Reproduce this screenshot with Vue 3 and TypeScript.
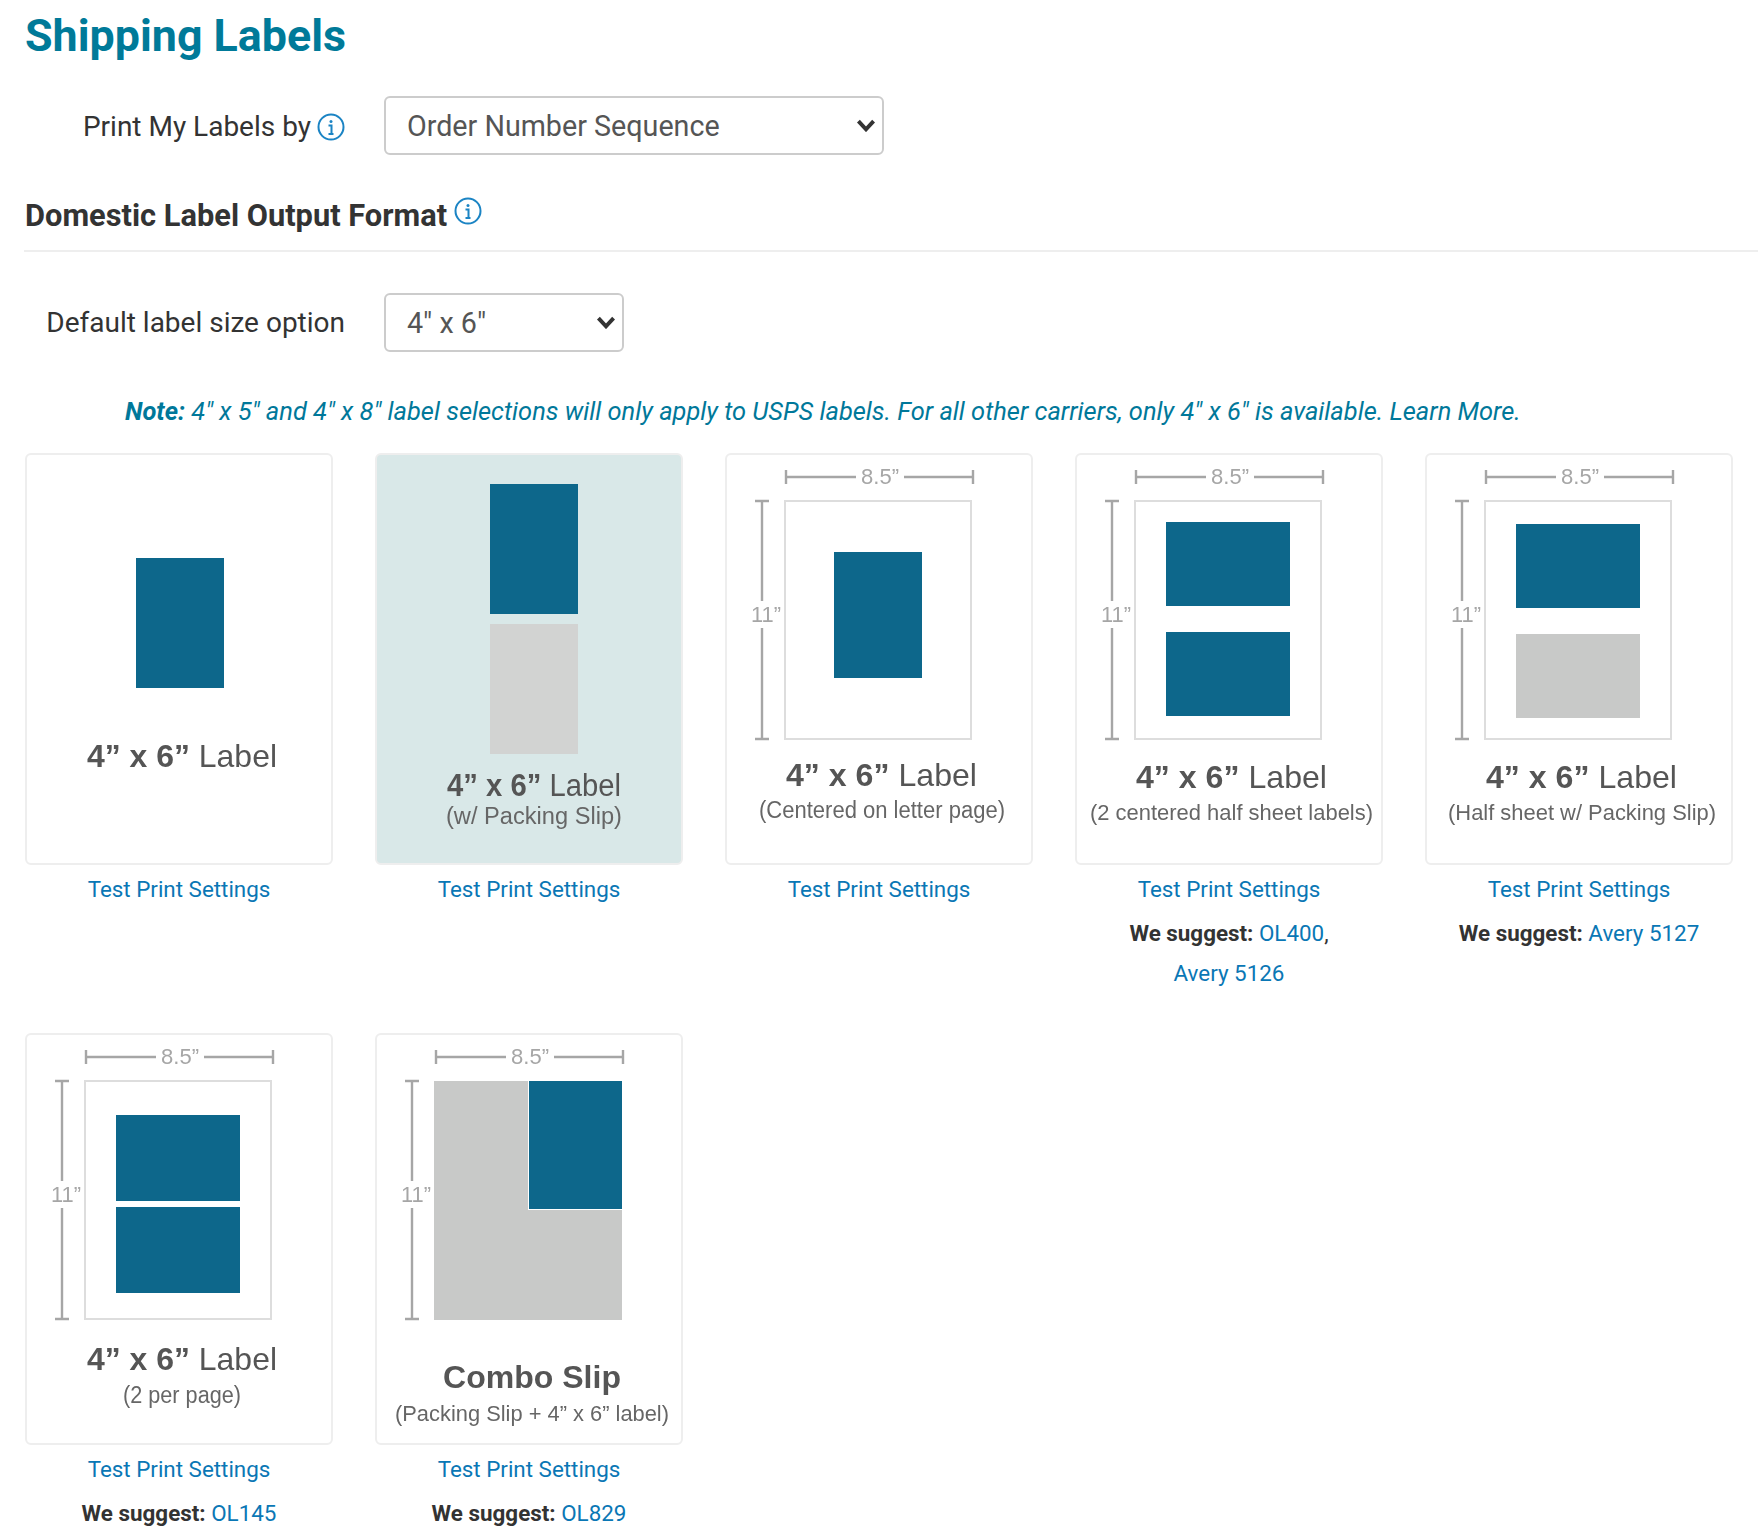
<script setup lang="ts">
interface Shape { x: number; y: number; w: number; h: number; c: string }
interface Line { x: number; y: number; len: number; t: string; bold?: string; rest?: string; size: number }
interface Sug { name: string; suffix?: string }
interface Card {
  dims: boolean
  page: boolean
  active?: boolean
  shapes: Shape[]
  title: Line
  sub?: Line
  suggest?: Sug[]
}
const BLUE = '#0d678b'
const GRAY = '#c8c9c8'
const t = (x: number, y: number, len: number, size = 32): Line => ({ x, y, len, t: '', bold: '4” x 6”', rest: ' Label', size })
const s = (x: number, y: number, len: number, text: string, size = 23): Line => ({ x, y, len, t: text, size })
const cards: Card[] = [
  { dims: false, page: false, shapes: [{ x: 111, y: 105, w: 88, h: 130, c: BLUE }], title: t(62, 314, 190) },
  { dims: false, page: false, active: true,
    shapes: [{ x: 115, y: 31, w: 88, h: 130, c: BLUE }, { x: 115, y: 171, w: 88, h: 130, c: '#d2d3d2' }],
    title: t(72, 343, 174, 31), sub: s(71, 371, 176, '(w/ Packing Slip)', 23) },
  { dims: true, page: true, shapes: [{ x: 109, y: 99, w: 88, h: 126, c: BLUE }],
    title: t(61, 333, 191), sub: s(34, 365, 246, '(Centered on letter page)') },
  { dims: true, page: true,
    shapes: [{ x: 91, y: 69, w: 124, h: 84, c: BLUE }, { x: 91, y: 179, w: 124, h: 84, c: BLUE }],
    title: t(61, 335, 191), sub: s(15, 367, 283, '(2 centered half sheet labels)', 21.5),
    suggest: [{ name: 'OL400', suffix: ',' }, { name: 'Avery 5126' }] },
  { dims: true, page: true,
    shapes: [{ x: 91, y: 71, w: 124, h: 84, c: BLUE }, { x: 91, y: 181, w: 124, h: 84, c: GRAY }],
    title: t(61, 335, 191), sub: s(23, 367, 268, '(Half sheet w/ Packing Slip)', 22),
    suggest: [{ name: 'Avery 5127' }] },
  { dims: true, page: true,
    shapes: [{ x: 91, y: 82, w: 124, h: 86, c: BLUE }, { x: 91, y: 174, w: 124, h: 86, c: BLUE }],
    title: t(62, 337, 190), sub: s(98, 370, 118, '(2 per page)'),
    suggest: [{ name: 'OL145' }] },
  { dims: true, page: false,
    shapes: [{ x: 59, y: 48, w: 188, h: 239, c: GRAY }, { x: 153, y: 48, w: 94, h: 129, c: '#ffffff' }, { x: 154, y: 48, w: 93, h: 128, c: BLUE }],
    title: { x: 68, y: 355, len: 178, t: 'Combo Slip', size: 32 },
    sub: s(20, 388, 274, '(Packing Slip + 4” x 6” label)', 21.5),
    suggest: [{ name: 'OL829' }] },
]
</script>

<template>
  <main class="page">
    <h1 class="title">Shipping Labels</h1>

    <div class="field first">
      <label class="field-label">
        Print My Labels by
        <svg class="info" viewBox="0 0 28 28" aria-hidden="true">
          <circle cx="14" cy="14" r="12.5" />
          <circle class="dot" cx="14" cy="8.5" r="1.5" />
          <path d="M11.5 12.5h3v8.5M11.5 21h5" />
        </svg>
      </label>
      <div class="select-wrap wide">
        <select class="select">
          <option>Order Number Sequence</option>
        </select>
        <svg class="chev" viewBox="0 0 18 12" aria-hidden="true"><path d="M2 2l7 7.5L16 2" /></svg>
      </div>
    </div>

    <h2 class="section">
      Domestic Label Output Format
      <svg class="info raised" viewBox="0 0 28 28" aria-hidden="true">
        <circle cx="14" cy="14" r="12.5" />
        <circle class="dot" cx="14" cy="8.5" r="1.5" />
        <path d="M11.5 12.5h3v8.5M11.5 21h5" />
      </svg>
    </h2>

    <div class="field">
      <label class="field-label">Default label size option</label>
      <div class="select-wrap narrow">
        <select class="select">
          <option>4" x 6"</option>
        </select>
        <svg class="chev" viewBox="0 0 18 12" aria-hidden="true"><path d="M2 2l7 7.5L16 2" /></svg>
      </div>
    </div>

    <p class="note">
      <strong>Note:</strong> 4" x 5" and 4" x 8" label selections will only apply to USPS labels. For all other carriers, only 4" x 6" is available. Learn More.
    </p>

    <div class="grid">
      <section v-for="(c, i) in cards" :key="i" class="cell">
        <div class="card" :class="{ active: c.active }">
          <svg class="art" viewBox="2 2 304 408" width="304" height="408">
            <g v-if="c.dims" class="dim">
              <path d="M61 17v14M61 24h70M179 24h69M248 17v14" />
              <path d="M30 48h14M37 48v100M37 175v111M30 286h14" />
              <text class="dim-text" x="136" y="31" textLength="38" lengthAdjust="spacingAndGlyphs">8.5”</text>
              <text class="dim-text" x="26" y="169" textLength="30" lengthAdjust="spacingAndGlyphs">11”</text>
            </g>
            <rect v-if="c.page" class="sheet" x="60" y="48" width="186" height="238" />
            <rect v-for="(r, j) in c.shapes" :key="j" :x="r.x" :y="r.y" :width="r.w" :height="r.h" :fill="r.c" />
            <text class="art-title" :x="c.title.x" :y="c.title.y" :font-size="c.title.size" :textLength="c.title.len" lengthAdjust="spacingAndGlyphs">
              <template v-if="c.title.bold"><tspan class="b">{{ c.title.bold }}</tspan>{{ c.title.rest }}</template>
              <tspan v-else class="b">{{ c.title.t }}</tspan>
            </text>
            <text v-if="c.sub" class="art-sub" :x="c.sub.x" :y="c.sub.y" :font-size="c.sub.size" :textLength="c.sub.len" lengthAdjust="spacingAndGlyphs">{{ c.sub.t }}</text>
          </svg>
        </div>
        <a class="link test" href="#" @click.prevent>Test Print Settings</a>
        <p v-if="c.suggest" class="suggest">
          <strong>We suggest:</strong>
          <template v-for="(g, k) in c.suggest" :key="k">
            {{ ' ' }}<a class="link" href="#" @click.prevent>{{ g.name }}</a>{{ g.suffix }}
          </template>
        </p>
      </section>
    </div>
  </main>
</template>

<style>
html, body { background: #fff; }
</style>

<style scoped>
.page {
  width: 1758px;
  height: 1530px;
  box-sizing: border-box;
  overflow: hidden;
  padding: 0 0 0 25px;
  font-family: Roboto, "Liberation Sans", sans-serif;
  color: #333;
}
.title {
  margin: 0;
  padding-top: 9px;
  font-size: 44.8px;
  line-height: 54px;
  font-weight: 700;
  color: #007a99;
}
.field {
  display: flex;
  align-items: center;
  gap: 39px;
  height: 59px;
}
.field.first { margin-top: 33px; }
.field-label {
  width: 320px;
  display: flex;
  justify-content: flex-end;
  align-items: center;
  gap: 6px;
  font-size: 28px;
  color: #333;
}
.field.first .field-label { padding-top: 2px; }
.info {
  width: 28px;
  height: 28px;
  flex: none;
  fill: none;
  stroke: #1b84c4;
  stroke-width: 2;
}
.info .dot { fill: #1b84c4; stroke: none; }
.raised { vertical-align: 1px; margin-left: -1px; }
.select-wrap {
  position: relative;
  height: 59px;
}
.select {
  display: block;
  width: 100%;
  height: 59px;
  box-sizing: border-box;
  border: 2px solid #ccc;
  border-radius: 6px;
  background: #fff;
  color: #555;
  font-family: inherit;
  font-size: 28.7px;
  padding: 0 12px 0 21px;
  appearance: none;
  -webkit-appearance: none;
}
.chev {
  position: absolute;
  right: 8px;
  top: 23px;
  width: 20px;
  height: 13px;
  fill: none;
  stroke: #333;
  stroke-width: 3.6;
  pointer-events: none;
}
.wide { width: 500px; }
.narrow { width: 240px; }
.section {
  margin: 38px 0 0 -1px;
  height: 59px;
  box-sizing: border-box;
  font-size: 30.8px;
  line-height: 46px;
  font-weight: 700;
  color: #333;
  border-bottom: 2px solid #eee;
  padding-left: 1px;
}
.section + .field { margin-top: 41px; }
.note {
  margin: 37px 0 0;
  padding-left: 100px;
  height: 45px;
  font-size: 25.45px;
  line-height: 45px;
  font-style: italic;
  color: #00789a;
  white-space: nowrap;
}
.grid {
  display: flex;
  flex-wrap: wrap;
  column-gap: 42px;
  row-gap: 40px;
  margin-top: 19px;
  width: 1733px;
}
.cell {
  width: 308px;
  text-align: center;
}
.card {
  width: 308px;
  height: 412px;
  box-sizing: border-box;
  border: 2px solid #eee;
  border-radius: 6px;
  overflow: hidden;
  background: #fff;
}
.card.active { background: #d9e8e8; }
.art { display: block; filter: blur(0.6px); }
.dim path { fill: none; stroke: #a6a6a6; stroke-width: 2.4; }
.dim-text {
  font-family: "Liberation Sans", sans-serif;
  font-size: 22px;
  fill: #a6a6a6;
}
.sheet { fill: #fff; stroke: #ddd; stroke-width: 2; }
.art-title {
  font-family: "Liberation Sans", sans-serif;
  fill: #555;
}
.art-title .b { font-weight: 700; }
.art-sub {
  font-family: "Liberation Sans", sans-serif;
  fill: #666;
}
.link {
  color: #0a77b5;
  text-decoration: none;
  white-space: nowrap;
}
.test {
  display: block;
  font-size: 22.4px;
  line-height: 40px;
  margin-top: 4px;
}
.suggest {
  margin: 4px 0 0;
  font-size: 22.4px;
  line-height: 40px;
  color: #333;
}
.suggest strong { font-weight: 700; }
</style>
